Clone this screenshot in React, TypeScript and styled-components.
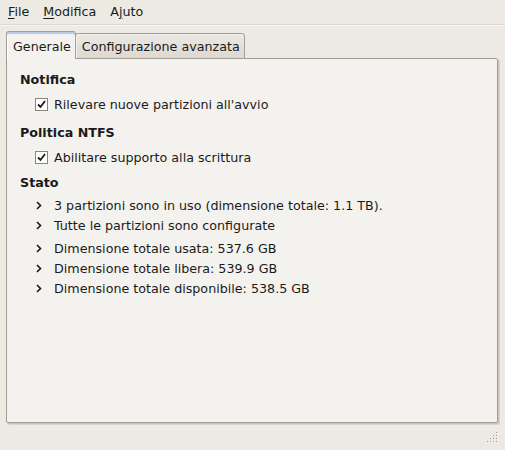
import * as React from 'react';
import styled, { createGlobalStyle, css } from 'styled-components';

const GlobalStyle = createGlobalStyle`
    html, body {
        margin: 0;
        padding: 0;
        background: #edeae4;
    }
    body {
        font-family: "DejaVu Sans", "Liberation Sans", sans-serif;
        font-size: 12.7px;
        color: #1a1a1a;
    }
`

const Window = styled.div`
    width: 505px;
    height: 450px;
    display: flex;
    flex-direction: column;
    background: #edeae4;
    overflow: hidden;
`

const MenuBar = styled.div`
    height: 24px;
    display: flex;
    align-items: center;
    padding-left: 1px;
    border-bottom: 1px solid #dcd7cf;
    box-shadow: 0 1px 0 #f7f5f2;
`

const MenuItem = styled.div`
    padding: 0 7px;
    line-height: 24px;
`

const Mnemonic = styled.span`
    text-decoration: underline;
    text-underline-offset: 2px;
`

const Notebook = styled.div`
    flex: 1;
    display: flex;
    flex-direction: column;
    padding: 6px 7px 0 6px;
`

const TabRow = styled.div`
    display: flex;
    align-items: flex-end;
    height: 28px;
    margin-bottom: -1px;
    position: relative;
    z-index: 1;
`

const Tab = styled.div<{ $active?: boolean }>`
    box-sizing: border-box;
    display: flex;
    align-items: center;
    padding: 0 4px 0 6px;
    border: 1px solid #a59d91;
    border-bottom: 0;
    border-radius: 3px 3px 0 0;
    ${(p) => p.$active ? css`
        height: 28px;
        background: #f4f2ef;
        border-color: #8da2bd #a59d91 transparent #a59d91;
        box-shadow: inset 0 2px 0 #b8cbe2, inset 1px 0 0 #ffffff;
        padding-top: 2px;
    ` : css`
        height: 26px;
        margin-left: -1px;
        background: linear-gradient(#ebe8e3, #ddd8d0);
        box-shadow: inset 1px 1px 0 #f4f2ef;
        border-bottom: 1px solid #a59d91;
    `}
`

const Page = styled.div`
    box-sizing: border-box;
    height: 365px;
    background: #f4f2ef;
    border: 1px solid #a59d91;
    box-shadow: 1px 1px 0 #c9c2b8, 2px 2px 0 #d8d3cb;
    border-radius: 0 2px 2px 2px;
    padding: 11px 14px 0 13px;
`

const Section = styled.section<{ $gap?: number }>`
    margin-top: ${(p) => p.$gap || 0}px;
`

const Heading = styled.div<{ $after?: number }>`
    height: 20px;
    line-height: 20px;
    font-weight: bold;
    font-size: 12.7px;
    margin-bottom: ${(p) => p.$after ?? 4}px;
`

const Row = styled.div<{ $gap?: number }>`
    display: flex;
    align-items: center;
    height: 20px;
    padding-left: 15px;
    gap: 6px;
    margin-top: ${(p) => p.$gap || 0}px;
`

const CheckBox = styled.span`
    box-sizing: border-box;
    width: 13px;
    height: 13px;
    border: 1px solid #8c8478;
    background: #ffffff;
    display: inline-flex;
    align-items: center;
    justify-content: center;
`

const ArrowWrap = styled.span`
    width: 13px;
    display: inline-flex;
    justify-content: flex-start;
    padding-left: 1px;
    box-sizing: border-box;
`

const StatusBar = styled.div`
    height: 28px;
    display: flex;
    justify-content: flex-end;
    align-items: flex-end;
    padding: 0 7px 7px 0;
`

const Check = () => (
    <CheckBox>
        <svg width="9" height="9" viewBox="0 0 9 9">
            <path d="M1 4.5 L3.5 7 L8 1" fill="none" stroke="#1a1a1a" strokeWidth="1.8" />
        </svg>
    </CheckBox>
)

const Arrow = () => (
    <ArrowWrap>
        <svg width="6" height="9" viewBox="0 0 6 9">
            <path d="M1 1 L4.5 4.5 L1 8" fill="none" stroke="#1a1a1a" strokeWidth="1.6" />
        </svg>
    </ArrowWrap>
)

const Grip = () => {
    const dots: [number, number][] = [];
    for (let r = 0; r < 4; r++) {
        for (let c = 3 - r; c < 4; c++) {
            dots.push([c * 3, r * 3]);
        }
    }
    return (
        <svg width="11" height="11" viewBox="0 0 11 11">
            {dots.map(([x, y], i) => (
                <rect key={i} x={x} y={y} width="1" height="1" fill="#a59d91" />
            ))}
        </svg>
    );
}

const statusRows = [
    { text: '3 partizioni sono in uso (dimensione totale: 1.1 TB).', gap: 0 },
    { text: 'Tutte le partizioni sono configurate', gap: 0 },
    { text: 'Dimensione totale usata: 537.6 GB', gap: 3 },
    { text: 'Dimensione totale libera: 539.9 GB', gap: 0 },
    { text: 'Dimensione totale disponibile: 538.5 GB', gap: 0 },
];

export default function App() {
    return (
        <Window>
            <GlobalStyle />
            <MenuBar>
                <MenuItem><Mnemonic>F</Mnemonic>ile</MenuItem>
                <MenuItem><Mnemonic>M</Mnemonic>odifica</MenuItem>
                <MenuItem>A<Mnemonic>j</Mnemonic>uto</MenuItem>
            </MenuBar>
            <Notebook>
                <TabRow>
                    <Tab $active>Generale</Tab>
                    <Tab>Configurazione avanzata</Tab>
                </TabRow>
                <Page>
                    <Section>
                        <Heading>Notifica</Heading>
                        <Row><Check />Rilevare nuove partizioni all'avvio</Row>
                    </Section>
                    <Section $gap={9}>
                        <Heading>Politica NTFS</Heading>
                        <Row><Check />Abilitare supporto alla scrittura</Row>
                    </Section>
                    <Section $gap={6}>
                        <Heading $after={2}>Stato</Heading>
                        {statusRows.map((r) => (
                            <Row key={r.text} $gap={r.gap}><Arrow />{r.text}</Row>
                        ))}
                    </Section>
                </Page>
            </Notebook>
            <StatusBar>
                <Grip />
            </StatusBar>
        </Window>
    );
}
